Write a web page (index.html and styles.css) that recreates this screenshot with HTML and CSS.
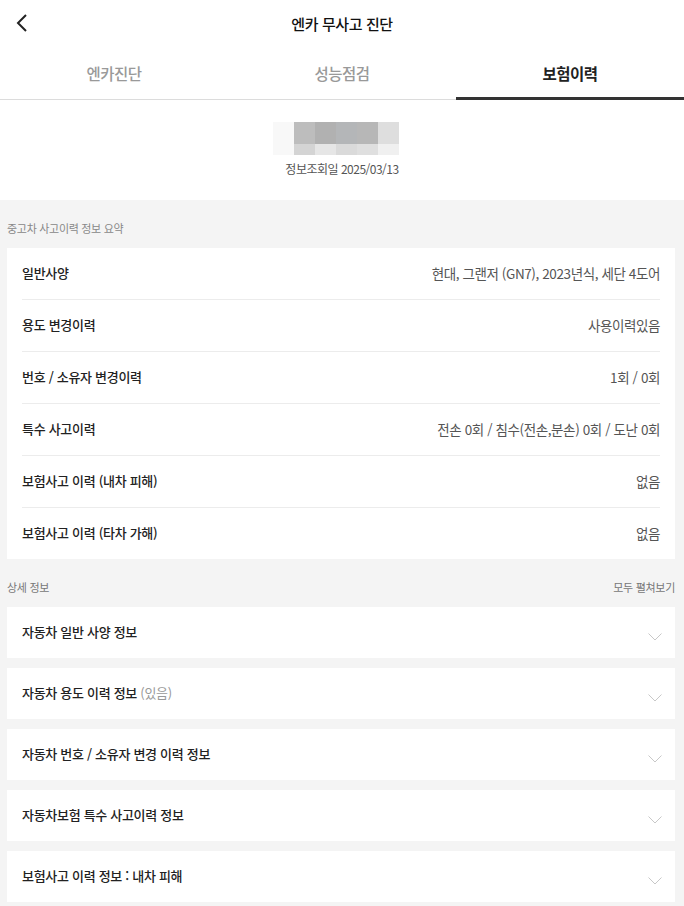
FILE: index.html
```html
<!DOCTYPE html>
<html lang="ko">
<head>
<meta charset="utf-8">
<title>엔카 무사고 진단</title>
<link rel="stylesheet" href="styles.css">
</head>
<body>
<header class="topbar">
  <button class="back" aria-label="뒤로">
    <svg width="14" height="20" viewBox="0 0 14 20"><path d="M11 2 L3 10 L11 18" fill="none" stroke="#222" stroke-width="2"/></svg>
  </button>
  <h1 class="title">엔카 무사고 진단</h1>
</header>
<nav class="tabs">
  <div class="tab">엔카진단</div>
  <div class="tab">성능점검</div>
  <div class="tab active">보험이력</div>
</nav>
<section class="vehicle">
  <div class="plate">
    <span class="px c0"></span><span class="px c1"></span><span class="px c2"></span><span class="px c3"></span><span class="px c4"></span><span class="px c5"></span>
    <span class="px c0"></span><span class="px c6"></span><span class="px c7"></span><span class="px c8"></span><span class="px c9"></span><span class="px c10"></span>
  </div>
  <p class="date">정보조회일 2025/03/13</p>
</section>
<section class="report">
  <div class="sec-head"><span>중고차 사고이력 정보 요약</span></div>
  <div class="summary">
    <div class="row"><span class="label">일반사양</span><span class="value">현대, 그랜저 (GN7), 2023년식, 세단 4도어</span></div>
    <div class="row"><span class="label">용도 변경이력</span><span class="value">사용이력있음</span></div>
    <div class="row"><span class="label">번호 / 소유자 변경이력</span><span class="value">1회 / 0회</span></div>
    <div class="row"><span class="label">특수 사고이력</span><span class="value">전손 0회 / 침수(전손,분손) 0회 / 도난 0회</span></div>
    <div class="row"><span class="label">보험사고 이력 (내차 피해)</span><span class="value">없음</span></div>
    <div class="row"><span class="label">보험사고 이력 (타차 가해)</span><span class="value">없음</span></div>
  </div>
  <div class="sec-head detail"><span>상세 정보</span><span>모두 펼쳐보기</span></div>
  <div class="acc-list">
    <div class="acc"><span class="acc-title">자동차 일반 사양 정보</span><svg class="chev" width="14" height="8" viewBox="0 0 14 8"><path d="M0.5 0.5 L7 7 L13.5 0.5" fill="none" stroke="#c8c8c8" stroke-width="1"/></svg></div>
    <div class="acc"><span class="acc-title">자동차 용도 이력 정보 <em class="muted">(있음)</em></span><svg class="chev" width="14" height="8" viewBox="0 0 14 8"><path d="M0.5 0.5 L7 7 L13.5 0.5" fill="none" stroke="#c8c8c8" stroke-width="1"/></svg></div>
    <div class="acc"><span class="acc-title">자동차 번호 / 소유자 변경 이력 정보</span><svg class="chev" width="14" height="8" viewBox="0 0 14 8"><path d="M0.5 0.5 L7 7 L13.5 0.5" fill="none" stroke="#c8c8c8" stroke-width="1"/></svg></div>
    <div class="acc"><span class="acc-title">자동차보험 특수 사고이력 정보</span><svg class="chev" width="14" height="8" viewBox="0 0 14 8"><path d="M0.5 0.5 L7 7 L13.5 0.5" fill="none" stroke="#c8c8c8" stroke-width="1"/></svg></div>
    <div class="acc"><span class="acc-title">보험사고 이력 정보 : 내차 피해</span><svg class="chev" width="14" height="8" viewBox="0 0 14 8"><path d="M0.5 0.5 L7 7 L13.5 0.5" fill="none" stroke="#c8c8c8" stroke-width="1"/></svg></div>
  </div>
</section>
</body>
</html>
```
FILE: styles.css
```css
* { box-sizing: border-box; }
html, body { margin: 0; padding: 0; }
body {
  font-family: "Noto Sans CJK KR", "Noto Sans", sans-serif;
  color: #222;
  background: #f4f4f4;
  width: 684px;
}
.topbar {
  height: 47px;
  display: flex;
  align-items: center;
  justify-content: center;
  position: relative;
  background: #fff;
}
.back {
  position: absolute;
  left: 15px;
  top: 13px;
  border: 0;
  background: none;
  padding: 0;
  width: 14px;
  height: 20px;
  display: flex;
}
.title {
  margin: 0;
  font-size: 15px;
  font-weight: 500;
  letter-spacing: -0.4px;
  color: #111;
}
.tabs {
  display: flex;
  height: 53px;
  background: #fff;
  border-bottom: 1px solid #dcdcdc;
}
.tab {
  flex: 1;
  display: flex;
  align-items: center;
  justify-content: center;
  font-size: 15.5px;
  font-weight: 500;
  color: #999;
  letter-spacing: -0.5px;
  padding-top: 0;
}
.tab.active {
  color: #222;
  font-weight: 700;
  border-bottom: 3px solid #333;
  margin-bottom: -1px;
  padding-top: 2px;
}
.vehicle {
  background: #fff;
  padding: 22px 0 22px;
  display: flex;
  flex-direction: column;
  align-items: center;
}
.plate {
  display: grid;
  grid-template-columns: repeat(6, 21px);
  grid-template-rows: 22px 11px;
  margin-right: 12px;
}
.px { display: block; }
.c0 { background: #f8f8f8; }
.c1 { background: #bdbdbd; }
.c2 { background: #b1b1b1; }
.c3 { background: #b4b6b8; }
.c4 { background: #b7b7b7; }
.c5 { background: #dedede; }
.c6 { background: #d4d4d4; }
.c7 { background: #e6e6e6; }
.c8 { background: #dadada; }
.c9 { background: #dfdfdf; }
.c10 { background: #f0f0f0; }
.date {
  margin: 5px 0 0;
  font-size: 12px;
  line-height: 18px;
  color: #555;
  letter-spacing: -0.5px;
}
.report {
  padding: 20px 9px 4px 7px;
}
.sec-head {
  display: flex;
  justify-content: space-between;
  font-size: 11px;
  line-height: 16px;
  color: #888;
  letter-spacing: -0.3px;
  margin-bottom: 12px;
}
.sec-head.detail { margin-top: 20px; color: #777; }
.summary {
  background: #fff;
  padding: 0 15px;
}
.row {
  height: 52px;
  display: flex;
  align-items: center;
  justify-content: space-between;
  border-bottom: 1px solid #ececec;
  padding-bottom: 2px;
}
.row:last-child { border-bottom: 0; height: 51px; }
.label {
  font-size: 13px;
  font-weight: 500;
  color: #222;
  letter-spacing: -0.3px;
}
.value {
  font-size: 13.5px;
  color: #555;
  letter-spacing: -0.4px;
}
.acc-list {
  display: flex;
  flex-direction: column;
  gap: 10px;
}
.acc {
  height: 51px;
  background: #fff;
  display: flex;
  align-items: center;
  justify-content: space-between;
  padding: 0 13px 0 15px;
}
.acc-title {
  font-size: 13px;
  font-weight: 500;
  color: #222;
  letter-spacing: -0.3px;
  padding-bottom: 2px;
}
.muted {
  font-style: normal;
  font-weight: 400;
  color: #999;
}
.chev { margin-top: 9px; }
```
